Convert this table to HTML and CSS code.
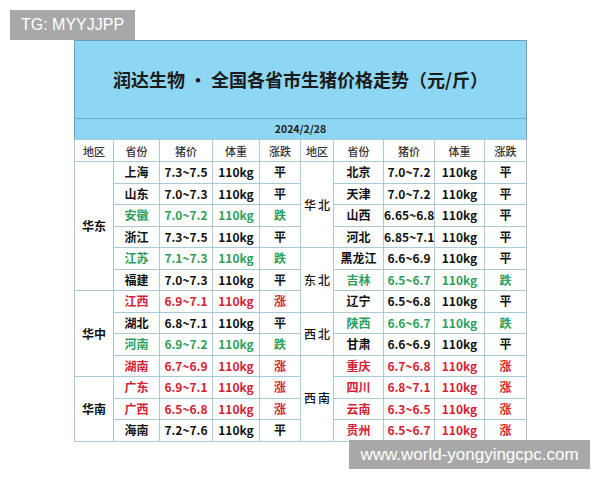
FILE: index.html
```html
<!DOCTYPE html>
<html lang="zh">
<head>
<meta charset="utf-8">
<link rel="stylesheet" href="styles.css">
</head>
<body>
<div class="badge">TG: MYYJJPP</div>
<div class="sheet">
<table class="price">
  <colgroup>
    <col class="c1"><col class="c2"><col class="c3"><col class="c4"><col class="c5">
    <col class="c6"><col class="c7"><col class="c8"><col class="c9"><col class="c10">
  </colgroup>
  <tr class="title-row"><td colspan="10">润达生物 · 全国各省市生猪价格走势（元/斤）</td></tr>
  <tr class="date-row"><td colspan="10">2024/2/28</td></tr>
  <tr class="head">
    <td>地区</td><td>省份</td><td>猪价</td><td>体重</td><td>涨跌</td>
    <td>地区</td><td>省份</td><td>猪价</td><td>体重</td><td>涨跌</td>
  </tr>
  <tr>
    <td class="area" rowspan="6">华东</td>
    <td>上海</td><td>7.3~7.5</td><td>110kg</td><td>平</td>
    <td class="area sp" rowspan="4">华北</td>
    <td>北京</td><td>7.0~7.2</td><td>110kg</td><td>平</td>
  </tr>
  <tr>
    <td>山东</td><td>7.0~7.3</td><td>110kg</td><td>平</td>
    <td>天津</td><td>7.0~7.2</td><td>110kg</td><td>平</td>
  </tr>
  <tr>
    <td class="g">安徽</td><td class="g">7.0~7.2</td><td class="g">110kg</td><td class="g">跌</td>
    <td>山西</td><td>6.65~6.8</td><td>110kg</td><td>平</td>
  </tr>
  <tr>
    <td>浙江</td><td>7.3~7.5</td><td>110kg</td><td>平</td>
    <td>河北</td><td>6.85~7.1</td><td>110kg</td><td>平</td>
  </tr>
  <tr>
    <td class="g">江苏</td><td class="g">7.1~7.3</td><td class="g">110kg</td><td class="g">跌</td>
    <td class="area sp" rowspan="3">东北</td>
    <td>黑龙江</td><td>6.6~6.9</td><td>110kg</td><td>平</td>
  </tr>
  <tr>
    <td>福建</td><td>7.0~7.3</td><td>110kg</td><td>平</td>
    <td class="g">吉林</td><td class="g">6.5~6.7</td><td class="g">110kg</td><td class="g">跌</td>
  </tr>
  <tr>
    <td class="area" rowspan="4">华中</td>
    <td class="r">江西</td><td class="r">6.9~7.1</td><td class="r">110kg</td><td class="r">涨</td>
    <td>辽宁</td><td>6.5~6.8</td><td>110kg</td><td>平</td>
  </tr>
  <tr>
    <td>湖北</td><td>6.8~7.1</td><td>110kg</td><td>平</td>
    <td class="area sp" rowspan="2">西北</td>
    <td class="g">陕西</td><td class="g">6.6~6.7</td><td class="g">110kg</td><td class="g">跌</td>
  </tr>
  <tr>
    <td class="g">河南</td><td class="g">6.9~7.2</td><td class="g">110kg</td><td class="g">跌</td>
    <td>甘肃</td><td>6.6~6.9</td><td>110kg</td><td>平</td>
  </tr>
  <tr>
    <td class="r">湖南</td><td class="r">6.7~6.9</td><td class="r">110kg</td><td class="r">涨</td>
    <td class="area sp" rowspan="4">西南</td>
    <td class="r">重庆</td><td class="r">6.7~6.8</td><td class="r">110kg</td><td class="r">涨</td>
  </tr>
  <tr>
    <td class="area" rowspan="3">华南</td>
    <td class="r">广东</td><td class="r">6.9~7.1</td><td class="r">110kg</td><td class="r">涨</td>
    <td class="r">四川</td><td class="r">6.8~7.1</td><td class="r">110kg</td><td class="r">涨</td>
  </tr>
  <tr>
    <td class="r">广西</td><td class="r">6.5~6.8</td><td class="r">110kg</td><td class="r">涨</td>
    <td class="r">云南</td><td class="r">6.3~6.5</td><td class="r">110kg</td><td class="r">涨</td>
  </tr>
  <tr>
    <td>海南</td><td>7.2~7.6</td><td>110kg</td><td>平</td>
    <td class="r">贵州</td><td class="r">6.5~6.7</td><td class="r">110kg</td><td class="r">涨</td>
  </tr>
</table>
</div>
<div class="mark">www.world-yongyingcpc.com</div>
</body>
</html>
```
FILE: styles.css
```css
html, body {
  margin: 0;
  padding: 0;
  background: #ffffff;
}
body {
  width: 600px;
  height: 480px;
  position: relative;
  overflow: hidden;
  font-family: "Noto Sans CJK SC", "Noto Sans", sans-serif;
}
.badge {
  position: absolute;
  left: 10px;
  top: 10px;
  width: 125px;
  height: 30px;
  background: #a8a8a8;
  color: #ffffff;
  font-family: "Liberation Sans", Arial, sans-serif;
  font-size: 16px;
  line-height: 30px;
  text-align: center;
}
.mark {
  position: absolute;
  left: 349px;
  top: 440px;
  width: 241px;
  height: 29px;
  background: #a8a8a8;
  color: #ffffff;
  font-family: "Liberation Sans", Arial, sans-serif;
  font-size: 17px;
  line-height: 29px;
  text-align: center;
}
.sheet {
  padding: 40px 0 0 74px;
}
.price {
  border-collapse: collapse;
  table-layout: fixed;
  width: 452px;
  border: 1px solid #6f9fb6;
  color: #111111;
}
.c1 { width: 39px; }
.c2 { width: 46px; }
.c3 { width: 53px; }
.c4 { width: 47px; }
.c5 { width: 41px; }
.c6 { width: 33px; }
.c7 { width: 50px; }
.c8 { width: 51px; }
.c9 { width: 50px; }
.c10 { width: 42px; }
.price td {
  border: 1px solid #a9cbd9;
  text-align: center;
  padding: 0;
  height: 20.5px;
  font-size: 12px;
  font-weight: 700;
  line-height: 14px;
  white-space: nowrap;
}
.price .title-row td {
  height: 75px;
  background: #8ed7f4;
  border: none;
  border-bottom: 1px solid #6fa9c2;
  font-size: 18px;
  font-weight: 700;
  color: #1b1b1b;
  padding-bottom: 2px;
}
.price .date-row td {
  height: 20px;
  background: #8ed7f4;
  border-left: none;
  border-right: none;
  font-size: 10.5px;
  font-weight: 700;
  color: #222222;
}
.price .head td {
  height: 21px;
  font-size: 11px;
  font-weight: 500;
  color: #333333;
}
.price td.area {
  font-size: 12px;
  font-weight: 700;
}
.price td.sp {
  font-weight: 500;
  letter-spacing: 2px;
  padding-left: 2px;
}
.price td.g {
  color: #2e9e5a;
}
.price td.r {
  color: #d42232;
}
```
